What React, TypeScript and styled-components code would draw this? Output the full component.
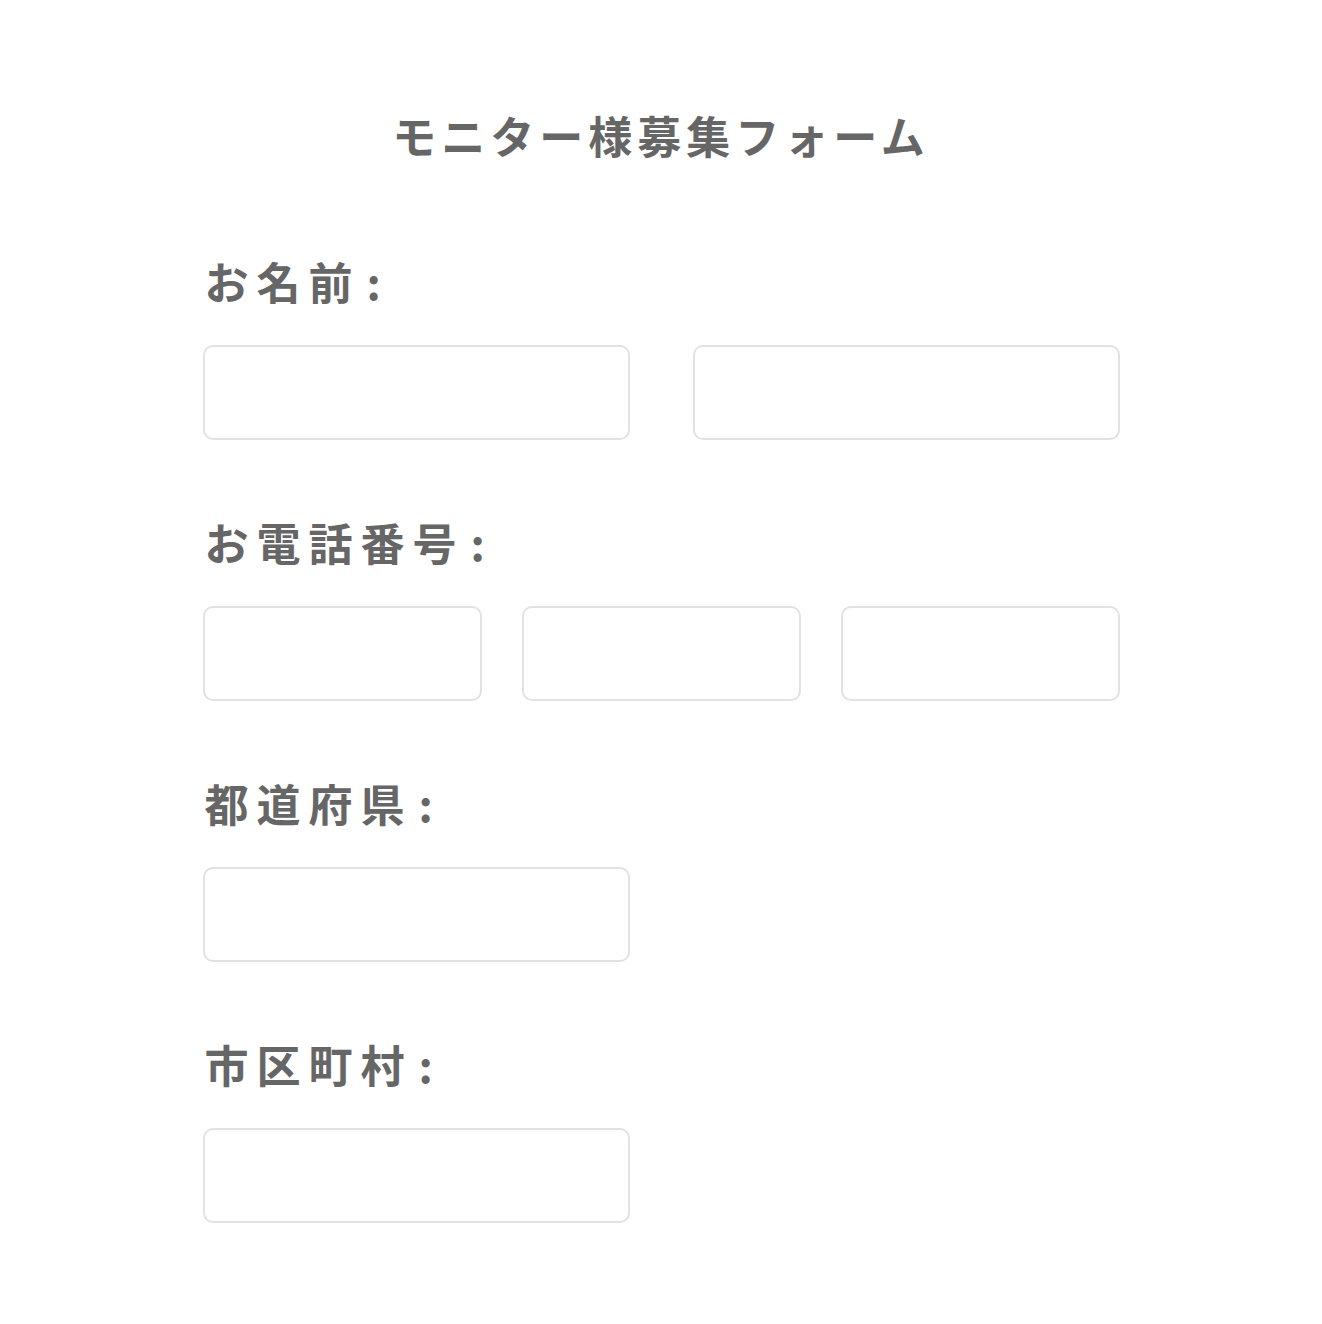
import { FC } from "react";
import styled, { createGlobalStyle } from "styled-components";

const GlobalStyle = createGlobalStyle`
  html, body {
    margin: 0;
    padding: 0;
    background: #fff;
  }
  body {
    font-family: "Noto Sans CJK JP", "Noto Sans", sans-serif;
    color: #666;
  }
`;

type Field = {
  label: string;
  cols: 2 | 3;
  count: number;
};

const fields: Field[] = [
  { label: "お名前", cols: 2, count: 2 },
  { label: "お電話番号", cols: 3, count: 3 },
  { label: "都道府県", cols: 2, count: 1 },
  { label: "市区町村", cols: 2, count: 1 },
];

const App: FC = () => {
  return (
    <>
      <GlobalStyle />
      <Page>
        <Title>モニター様募集フォーム</Title>
        <Form>
          {fields.map((f) => (
            <Section key={f.label}>
              <Label>
                {f.label}
                <Colon>:</Colon>
              </Label>
              <InputRow cols={f.cols}>
                {Array.from({ length: f.count }).map((_, i) => (
                  <TextInput key={i} type="text" />
                ))}
              </InputRow>
            </Section>
          ))}
        </Form>
      </Page>
    </>
  );
};

export default App;

const Page = styled.div`
  width: 917px;
  margin: 0 auto;
  padding-top: 108px;
  padding-bottom: 100px;
`;

const Title = styled.h1`
  margin: 0;
  text-align: center;
  font-size: 44px;
  font-weight: 700;
  line-height: 54px;
  letter-spacing: 5px;
  color: #666;
`;

const Form = styled.div`
  display: flex;
  flex-direction: column;
  gap: 72px;
  margin-top: 89px;
`;

const Section = styled.div`
  display: flex;
  flex-direction: column;
  gap: 34px;
`;

const Label = styled.div`
  font-size: 44px;
  font-weight: 700;
  line-height: 60px;
  letter-spacing: 8px;
  color: #666;
  padding-left: 2px;
`;

const Colon = styled.span`
  display: inline-block;
  margin-left: 6px;
  font-weight: 700;
`;

const InputRow = styled.div<{ cols: 2 | 3 }>`
  display: grid;
  grid-template-columns: ${({ cols }) =>
    cols === 3 ? "279px 279px 279px" : "427px 427px"};
  justify-content: space-between;
`;

const TextInput = styled.input`
  box-sizing: border-box;
  height: 95px;
  width: 100%;
  border: 2px solid #e2e2e2;
  border-radius: 10px;
  background: #fff;
  outline: none;
  font-size: 28px;
  padding: 0 16px;
`;
